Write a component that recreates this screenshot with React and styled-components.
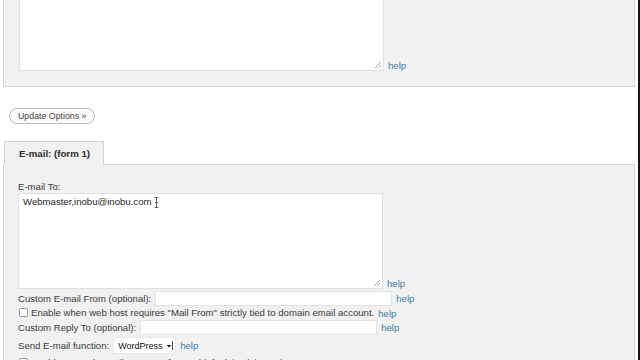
import React from "react";
import styled, { createGlobalStyle } from "styled-components";

const GlobalStyle = createGlobalStyle`
  html, body {
    margin: 0;
    padding: 0;
    background: #fff;
  }
  body {
    font-family: "Liberation Sans", Arial, sans-serif;
    color: #333;
  }
`;

const Page = styled.div`
  width: 640px;
  height: 360px;
  overflow: hidden;
  box-sizing: border-box;
  border-right: 2px solid #161616;
  background: #fff;
`;

// scrolled view: the first panel starts above the window
const Scroller = styled.div`
  margin-top: -23px;
`;

const Panel = styled.div`
  margin: 0 3px 0 3px;
  background: #f1f1f1;
  border: 1px solid #d6d6d6;
  border-top: ${(p) => (p.$noTop ? "none" : "1px solid #d6d6d6")};
  padding: ${(p) => p.$pad || "15px 15px 15px 15px"};
`;

const FieldRow = styled.div`
  display: flex;
  align-items: ${(p) => p.$align || "center"};
  gap: ${(p) => p.$gap || 4}px;
  height: ${(p) => p.$h || "auto"};
  margin-top: ${(p) => p.$mt || 0}px;
`;

const Label = styled.span`
  font-size: 9.6px;
  line-height: 12px;
  color: #3a3a3a;
  white-space: nowrap;
`;

const BlockLabel = styled(Label)`
  display: block;
  margin-bottom: 0;
`;

const Help = styled.a`
  font-size: 9.6px;
  line-height: 11px;
  color: #3c80aa;
  text-decoration: none;
  white-space: nowrap;
`;

const TextBox = styled.div`
  position: relative;
  width: 365px;
  height: ${(p) => p.$h}px;
  box-sizing: border-box;
  background: #fff;
  border: 1px solid #e0e0e0;
  font-size: 9.6px;
  color: #1e1e1e;
  padding: 2px 4px;
`;

const Grip = styled.svg`
  position: absolute;
  right: 1px;
  bottom: 1px;
`;

const Caret = styled.svg`
  vertical-align: middle;
  margin-left: 2px;
`;

const Input = styled.div`
  width: 237px;
  height: 15px;
  box-sizing: border-box;
  background: #fff;
  border: 1px solid #e3e3e3;
`;

const Check = styled.span`
  display: inline-block;
  vertical-align: -1px;
  width: 9px;
  height: 9px;
  box-sizing: border-box;
  border: 1px solid #9a9a9a;
  border-radius: 2px;
  background: #fff;
  margin-left: 1px;
  margin-right: 3px;
`;

const Select = styled.div`
  display: flex;
  align-items: center;
  justify-content: space-between;
  width: 61px;
  height: 15px;
  box-sizing: border-box;
  background: #fff;
  border-radius: 1px;
  padding: 0 2px 0 4px;
  font-size: 9px;
  color: #111;
  box-shadow: 0 0 0 1px #e8e8e8;
`;

const ButtonArea = styled.div`
  padding: 21px 0 17px 9px;
`;

const PillButton = styled.button`
  display: block;
  height: 16px;
  padding: 0 8px;
  border: 1px solid #bdbdbd;
  border-radius: 9px;
  background: #fafafa;
  font-family: "Liberation Sans", Arial, sans-serif;
  font-size: 8.8px;
  color: #444;
  line-height: 14px;
`;

const TabBar = styled.div`
  display: flex;
  margin: 0 3px;
  border-bottom: 1px solid #d6d6d6;
  height: 23px;
  align-items: flex-end;
`;

const Tab = styled.div`
  margin-left: 1px;
  margin-bottom: -1px;
  width: 100px;
  height: 24px;
  box-sizing: border-box;
  background: #f1f1f1;
  border: 1px solid #d3d3d3;
  border-bottom-color: #f1f1f1;
  font-size: 9.7px;
  font-weight: bold;
  color: #2b2b2b;
  padding: 6px 0 0 14px;
`;

const ResizeGrip = () => (
  <Grip width="9" height="9" viewBox="0 0 9 9">
    <path d="M8 2 L2 8 M8 5 L5 8" stroke="#9a9a9a" strokeWidth="0.9" />
  </Grip>
);

export default function App() {
  return (
    <Page>
      <GlobalStyle />
      <Scroller>
        <Panel $noTop $pad="0 15px 15px 15px">
          <FieldRow $align="flex-end">
            <TextBox $h={94}>
              <ResizeGrip />
            </TextBox>
            <Help href="#">help</Help>
          </FieldRow>
        </Panel>

        <ButtonArea>
          <PillButton>Update Options »</PillButton>
        </ButtonArea>

        <TabBar>
          <Tab>E-mail: (form 1)</Tab>
        </TabBar>

        <Panel $noTop $pad="16px 15px 0 14px">
          <BlockLabel>E-mail To:</BlockLabel>
          <FieldRow $align="flex-end">
            <TextBox $h={96}>
              Webmaster,inobu@inobu.com
              <Caret width="5" height="11" viewBox="0 0 5 11">
                <path d="M0.5 0.5 H4.5 M2.5 0.5 V10.5 M0.5 10.5 H4.5 M1 5.5 H4" stroke="#555" strokeWidth="0.9" fill="none" />
              </Caret>
              <ResizeGrip />
            </TextBox>
            <Help href="#">help</Help>
          </FieldRow>

          <FieldRow $mt={2} $h="15px">
            <Label>Custom E-mail From (optional):</Label>
            <Input />
            <Help href="#">help</Help>
          </FieldRow>

          <FieldRow $h="14px">
            <Label>
              <Check />
              {'Enable when web host requires "Mail From" strictly tied to domain email account.'}
            </Label>
            <Help href="#">help</Help>
          </FieldRow>

          <FieldRow $h="15px">
            <Label>Custom Reply To (optional):</Label>
            <Input />
            <Help href="#">help</Help>
          </FieldRow>

          <FieldRow $mt={3} $h="15px" $gap={5}>
            <Label>Send E-mail function:</Label>
            <Select>
              <span>WordPress</span>
              <svg width="7" height="9" viewBox="0 0 7 9">
                <path d="M0.5 4 L3 6.5 L5.5 4 Z" fill="#222" />
                <path d="M6.5 0 V9" stroke="#444" strokeWidth="1" />
              </svg>
            </Select>
            <Help href="#">help</Help>
          </FieldRow>

          <FieldRow $mt={3} $h="14px">
            <Label>
              <Check />
              Enable to send e-mail as HTML format (default is plain text).
            </Label>
          </FieldRow>
        </Panel>
      </Scroller>
    </Page>
  );
}
